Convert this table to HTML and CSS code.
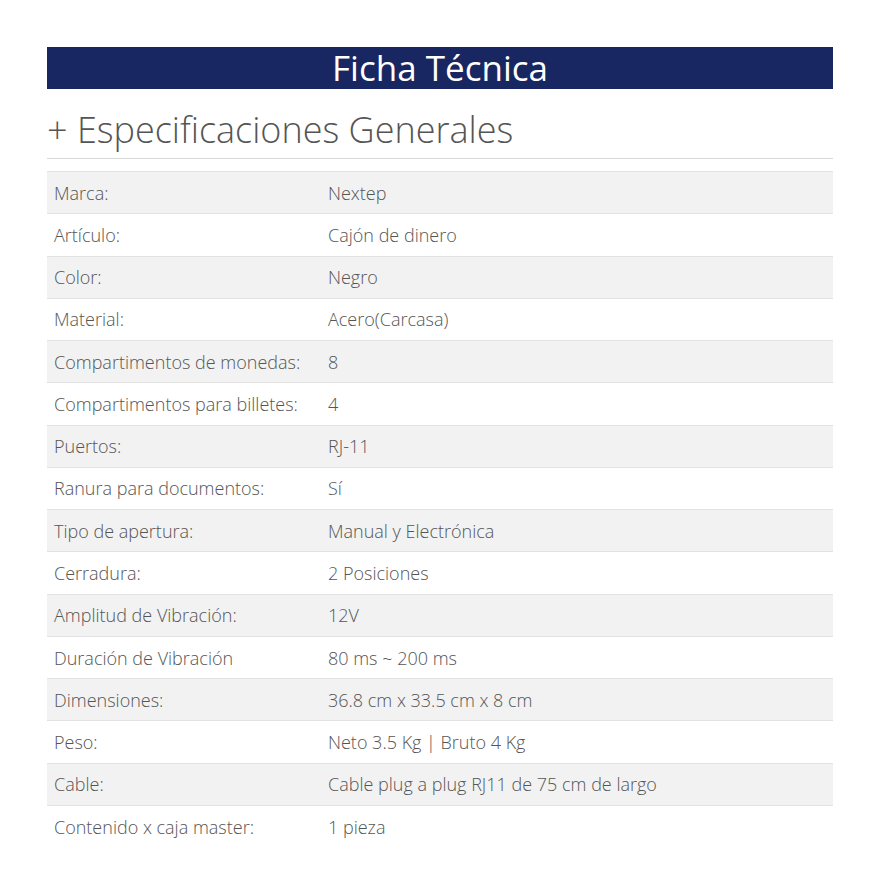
FILE: index.html
```html
<!DOCTYPE html>
<html lang="es">
<head>
<meta charset="utf-8">
<link rel="stylesheet" href="styles.css">
</head>
<body>
<div class="sheet">
  <h1 class="title">Ficha Técnica</h1>
  <h2 class="section">+ Especificaciones Generales</h2>
  <table class="specs">
    <tr><td>Marca:</td><td>Nextep</td></tr>
    <tr><td>Artículo:</td><td>Cajón de dinero</td></tr>
    <tr><td>Color:</td><td>Negro</td></tr>
    <tr><td>Material:</td><td>Acero(Carcasa)</td></tr>
    <tr><td>Compartimentos de monedas:</td><td>8</td></tr>
    <tr><td>Compartimentos para billetes:</td><td>4</td></tr>
    <tr><td>Puertos:</td><td>RJ-11</td></tr>
    <tr><td>Ranura para documentos:</td><td>Sí</td></tr>
    <tr><td>Tipo de apertura:</td><td>Manual y Electrónica</td></tr>
    <tr><td>Cerradura:</td><td>2 Posiciones</td></tr>
    <tr><td>Amplitud de Vibración:</td><td>12V</td></tr>
    <tr><td>Duración de Vibración</td><td>80 ms ~ 200 ms</td></tr>
    <tr><td>Dimensiones:</td><td>36.8 cm x 33.5 cm x 8 cm</td></tr>
    <tr><td>Peso:</td><td>Neto 3.5 Kg | Bruto 4 Kg</td></tr>
    <tr><td>Cable:</td><td>Cable plug a plug RJ11 de 75 cm de largo</td></tr>
    <tr><td>Contenido x caja master:</td><td>1 pieza</td></tr>
  </table>
</div>
</body>
</html>
```
FILE: styles.css
```css
html, body { margin: 0; padding: 0; background: #fff; }
body { font-family: "Open Sans", "Noto Sans", sans-serif; color: #555; }
.sheet { width: 786px; margin: 0 0 0 47px; padding-top: 47px; }
.title {
  margin: 0;
  height: 42px;
  line-height: 42px;
  background: #182661;
  color: #fff;
  text-align: center;
  font-weight: 400;
  font-size: 35px;
}
.section {
  margin: 0;
  padding: 16px 0 3px 0;
  font-weight: 300;
  font-size: 36px;
  line-height: 50px;
  color: #555;
  border-bottom: 1px solid #d8d8d8;
}
.specs {
  width: 100%;
  border-collapse: collapse;
  margin-top: 12px;
  font-size: 18px;
  font-weight: 300;
  color: #555;
}
.specs td {
  height: 41.27px;
  padding: 0 0 0 7px;
  border-top: 1px solid #e2e2e2;
  vertical-align: middle;
}
.specs td:first-child { width: 267px; }
.specs tr:nth-child(odd) td { background: #f2f2f2; }
```
